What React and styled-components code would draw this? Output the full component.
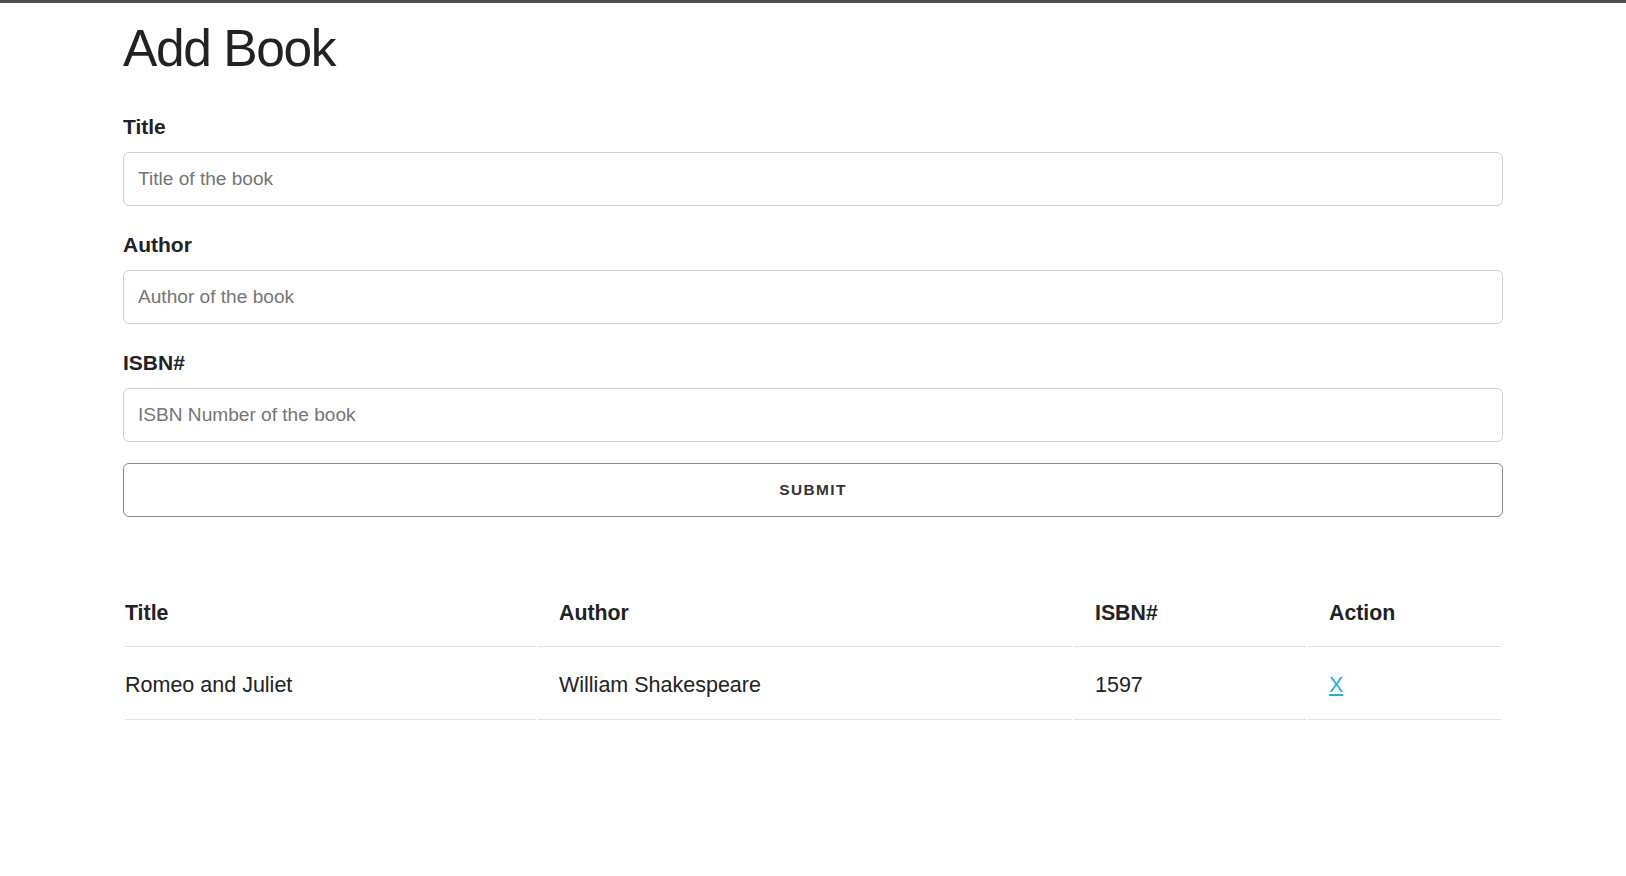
import React from "react";
import styled, { createGlobalStyle } from "styled-components";

const GlobalStyle = createGlobalStyle`
  *, *::before, *::after {
    box-sizing: border-box;
  }
  body {
    margin: 0;
    background: #fff;
    color: #222;
    font-family: "Liberation Sans", Arial, Helvetica, sans-serif;
    font-size: 21px;
    line-height: 1.6;
  }
`;

const TopBar = styled.div`
  height: 3px;
  background: #4f4f4f;
`;

const Container = styled.div`
  width: 1380px;
  margin: 0 auto;
`;

const Heading = styled.h1`
  margin: 15px 0 31px;
  font-size: 51.5px;
  font-weight: 300;
  line-height: 60px;
  letter-spacing: -1.4px;
  color: #222;
`;

const Form = styled.form`
  display: flex;
  flex-direction: column;
`;

const Label = styled.label`
  display: block;
  padding-top: 1px;
  font-size: 21px;
  font-weight: 700;
  line-height: 34px;
  margin-bottom: 8px;
`;

const Input = styled.input`
  display: block;
  width: 100%;
  height: 54px;
  margin: 0 0 21px;
  padding: 0 14px;
  border: 1px solid #d1d1d1;
  border-radius: 6px;
  background: #fff;
  font-family: "Liberation Sans", Arial, sans-serif;
  font-size: 19.1px;
  color: #222;
  outline: none;

  &::placeholder {
    color: #757575;
  }
`;

const SubmitButton = styled.button`
  display: block;
  width: 100%;
  height: 54px;
  padding: 0 42px;
  border: 1px solid #888;
  border-radius: 6px;
  background: transparent;
  color: #333;
  font-family: "Liberation Sans", Arial, sans-serif;
  font-size: 15.4px;
  font-weight: 700;
  letter-spacing: 1.4px;
  text-transform: uppercase;
  cursor: pointer;
`;

const Table = styled.table`
  width: 100%;
  margin-top: 60px;
  border-collapse: separate;
  border-spacing: 2px;
  table-layout: fixed;
`;

const HeadCell = styled.th`
  width: ${(p) => p.$w}px;
  padding: 17px 21px 16px;
  border-bottom: 1px solid #e1e1e1;
  text-align: left;
  font-size: 21.3px;
  font-weight: 700;
  line-height: 34px;

  &:first-child {
    padding-left: 0;
  }
  &:last-child {
    padding-right: 0;
  }
`;

const Cell = styled.td`
  padding: 19px 21px 17px;
  border-bottom: 1px solid #e1e1e1;
  text-align: left;
  font-size: 21.5px;
  line-height: 34px;

  &:first-child {
    padding-left: 0;
  }
  &:last-child {
    padding-right: 0;
  }
`;

const RemoveLink = styled.a`
  color: #1eaedb;
  text-decoration: underline;
  cursor: pointer;
`;

const columns = [
  { label: "Title", width: 411 },
  { label: "Author", width: 534 },
  { label: "ISBN#", width: 232 },
  { label: "Action", width: 193 },
];

const books = [{ title: "Romeo and Juliet", author: "William Shakespeare", isbn: "1597" }];

export default function App() {
  return (
    <>
      <GlobalStyle />
      <TopBar />
      <Container>
        <Heading>Add Book</Heading>
        <Form onSubmit={(e) => e.preventDefault()}>
          <Label htmlFor="title">Title</Label>
          <Input id="title" type="text" placeholder="Title of the book" />
          <Label htmlFor="author">Author</Label>
          <Input id="author" type="text" placeholder="Author of the book" />
          <Label htmlFor="isbn">ISBN#</Label>
          <Input id="isbn" type="text" placeholder="ISBN Number of the book" />
          <SubmitButton type="submit">Submit</SubmitButton>
        </Form>
        <Table>
          <thead>
            <tr>
              {columns.map((c) => (
                <HeadCell key={c.label} $w={c.width}>
                  {c.label}
                </HeadCell>
              ))}
            </tr>
          </thead>
          <tbody>
            {books.map((b) => (
              <tr key={b.isbn}>
                <Cell>{b.title}</Cell>
                <Cell>{b.author}</Cell>
                <Cell>{b.isbn}</Cell>
                <Cell>
                  <RemoveLink href="#">X</RemoveLink>
                </Cell>
              </tr>
            ))}
          </tbody>
        </Table>
      </Container>
    </>
  );
}
